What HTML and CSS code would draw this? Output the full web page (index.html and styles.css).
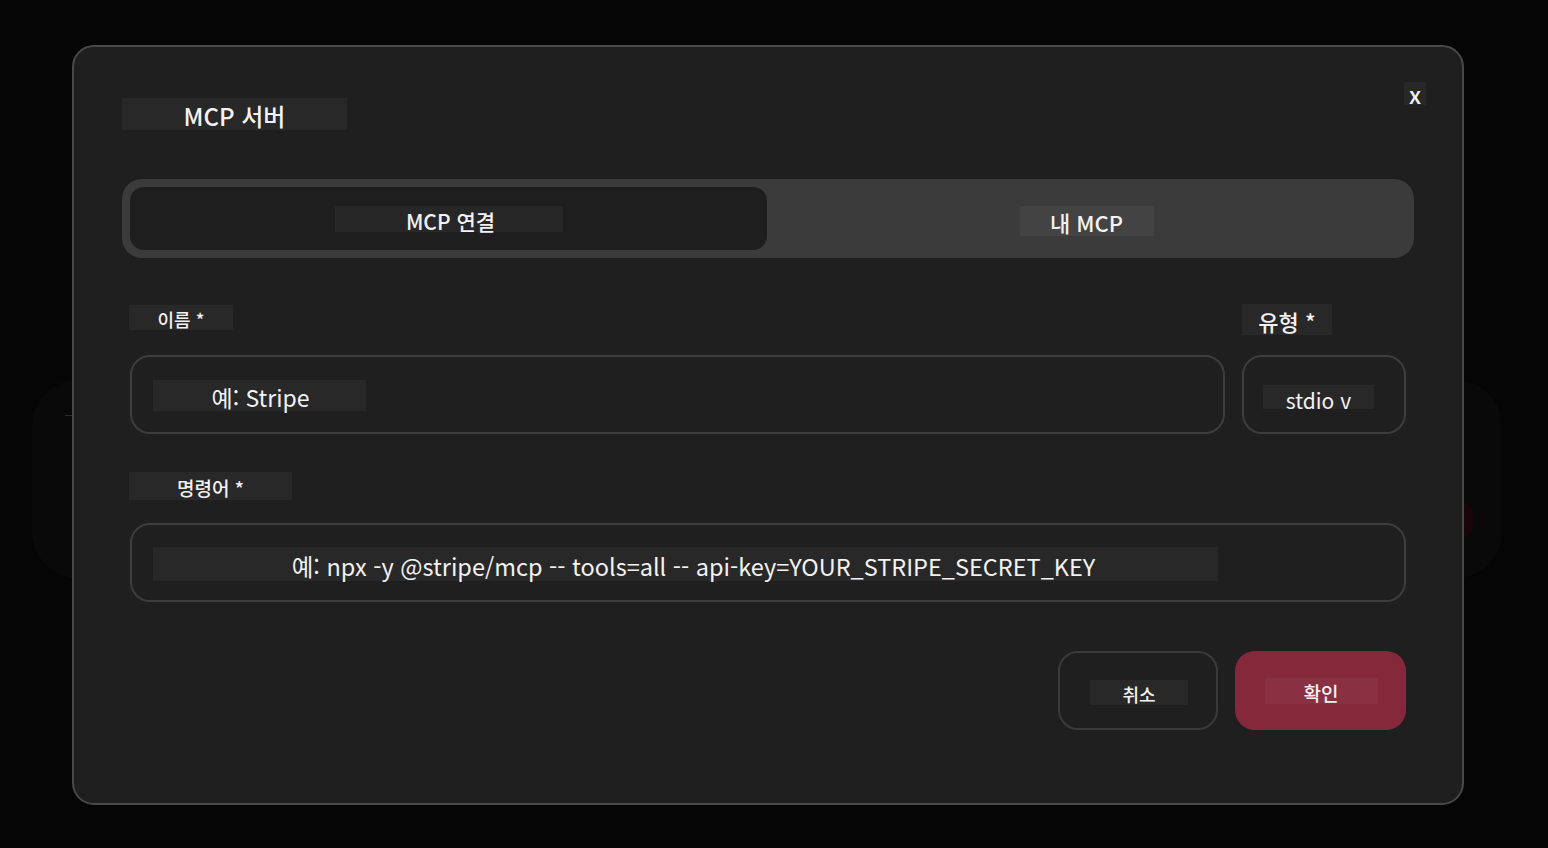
FILE: index.html
```html
<!DOCTYPE html>
<html lang="ko">
<head>
<meta charset="utf-8">
<title>MCP 서버</title>
<link rel="stylesheet" href="styles.css">
</head>
<body>
<div class="backdrop-card"></div>
<div class="backdrop-dot"></div>
<div class="backdrop-dash"></div>
<div class="overlay">
  <div class="modal">
    <div class="title hl">MCP 서버</div>
    <button class="close hl">x</button>
    <div class="tabs">
      <div class="tab tab-active"><span class="tab1-label hl">MCP 연결</span></div>
      <div class="tab tab-idle"><span class="tab2-label hl">내 MCP</span></div>
    </div>
    <div class="form">
      <div class="row">
        <div class="field field-name">
          <div class="label-wrap"><span class="label label-name hl">이름 *</span></div>
          <div class="input"><span class="ph ph-name hl">예: Stripe</span></div>
        </div>
        <div class="field field-type">
          <div class="label-wrap"><span class="label label-type hl">유형 *</span></div>
          <div class="input input-select"><span class="ph ph-type hl">stdio v</span></div>
        </div>
      </div>
      <div class="field field-cmd">
        <div class="label-wrap label-wrap-cmd"><span class="label label-cmd hl">명령어 *</span></div>
        <div class="input"><span class="ph ph-cmd hl">예: npx -y @stripe/mcp -- tools=all -- api-key=YOUR_STRIPE_SECRET_KEY</span></div>
      </div>
      <div class="actions">
        <button class="btn btn-cancel"><span class="btn-label btn-label-cancel hl">취소</span></button>
        <button class="btn btn-ok"><span class="btn-label btn-label-ok hl">확인</span></button>
      </div>
    </div>
  </div>
</div>
</body>
</html>
```
FILE: styles.css
```css
* { box-sizing: border-box; }
html, body {
  margin: 0;
  width: 1548px;
  height: 848px;
  overflow: hidden;
}
body {
  position: relative;
  background: #050505;
  font-family: "Noto Sans CJK KR", "Noto Sans", sans-serif;
  color: #f2f2f2;
}
.backdrop-card {
  position: absolute;
  left: 32px;
  top: 380px;
  width: 1470px;
  height: 198px;
  border-radius: 46px;
  background: #090909;
}
.backdrop-dot {
  position: absolute;
  left: 1432px;
  top: 499px;
  width: 42px;
  height: 42px;
  border-radius: 50%;
  background: #1a060a;
}
.backdrop-dash {
  position: absolute;
  left: 65px;
  top: 415px;
  width: 8px;
  height: 1px;
  background: #2c2c2c;
}
.overlay {
  position: relative;
  padding: 45px 0 0 72px;
}
.modal {
  position: relative;
  width: 1392px;
  height: 760px;
  border: 2px solid #484848;
  border-radius: 22px;
  background: #1f1f1f;
  padding: 51px 48px 0 48px;
}
.hl { background: rgba(255, 255, 255, 0.045); }
.title {
  width: 225px;
  height: 32px;
  line-height: 36px;
  text-align: center;
  font-size: 24px;
  font-weight: 500;
}
.close {
  position: absolute;
  left: 1330px;
  top: 35px;
  width: 22px;
  height: 23px;
  padding: 0;
  border: 0;
  color: #f2f2f2;
  font-family: "Noto Sans CJK KR", "Noto Sans", sans-serif;
  font-size: 23px;
  font-weight: 500;
  line-height: 24px;
  text-align: center;
}
.tabs {
  display: flex;
  margin-top: 49px;
  height: 79px;
  padding: 8px;
  border-radius: 20px;
  background: #3b3b3b;
}
.tab {
  display: flex;
  align-items: center;
  justify-content: center;
}
.tab-active {
  width: 637px;
  border-radius: 14px;
  background: #1e1e1e;
}
.tab-idle { flex: 1; }
.tab1-label {
  width: 228px;
  height: 26px;
  line-height: 30px;
  margin-top: 1px;
  padding-left: 4px;
  text-align: center;
  font-size: 21px;
  font-weight: 500;
}
.tab2-label {
  width: 134px;
  height: 30px;
  line-height: 32px;
  margin-top: 5px;
  text-align: center;
  font-size: 22px;
  font-weight: 500;
}
.form {
  padding: 0 8px;
}
.row {
  display: flex;
  gap: 17px;
  margin-top: 47px;
}
.field-name { width: 1095px; }
.field-type { flex: 1; }
.label-wrap {
  height: 50px;
}
.label {
  display: inline-block;
  text-align: center;
  font-weight: 500;
}
.label-name {
  width: 104px;
  height: 25px;
  line-height: 28px;
  font-size: 18px;
  margin-left: -1px;
}
.label-type {
  width: 90px;
  height: 31px;
  line-height: 34px;
  font-size: 22px;
  margin-top: -1px;
}
.input {
  display: flex;
  align-items: center;
  height: 79px;
  padding: 2px 21px 0;
  border: 2px solid #3d3d3d;
  border-radius: 20px;
}
.input-select {
  padding: 2px 19px 0;
}
.ph {
  display: inline-block;
  text-align: center;
  font-weight: 400;
}
.ph-name {
  width: 213px;
  height: 31px;
  line-height: 34px;
  font-size: 23px;
  padding-left: 2px;
}
.ph-type {
  width: 111px;
  height: 24px;
  line-height: 30px;
  font-size: 21px;
  margin-top: 2px;
}
.field-cmd { margin-top: 38px; }
.label-wrap-cmd { height: 51px; }
.label-cmd {
  width: 163px;
  height: 28px;
  line-height: 32px;
  font-size: 19px;
  margin-left: -1px;
}
.ph-cmd {
  width: 1065px;
  height: 34px;
  line-height: 38px;
  font-size: 23.5px;
  padding-left: 16px;
}
.actions {
  display: flex;
  justify-content: flex-end;
  gap: 17px;
  margin-top: 49px;
}
.btn {
  display: flex;
  align-items: center;
  justify-content: center;
  height: 79px;
  border-radius: 20px;
  padding: 0;
  font-family: "Noto Sans CJK KR", "Noto Sans", sans-serif;
  color: #f2f2f2;
}
.btn-cancel {
  width: 160px;
  border: 2px solid #3a3a3a;
  background: transparent;
}
.btn-ok {
  width: 171px;
  border: 0;
  background: #84283a;
}
.btn-label {
  display: inline-block;
  text-align: center;
  font-weight: 500;
}
.btn-label-cancel {
  width: 98px;
  height: 25px;
  line-height: 28px;
  font-size: 18px;
  margin-left: 2px;
  margin-top: 3px;
}
.btn-label-ok {
  width: 113px;
  height: 26px;
  line-height: 30px;
  font-size: 19px;
  margin-left: 1px;
  margin-top: 1px;
}
```
